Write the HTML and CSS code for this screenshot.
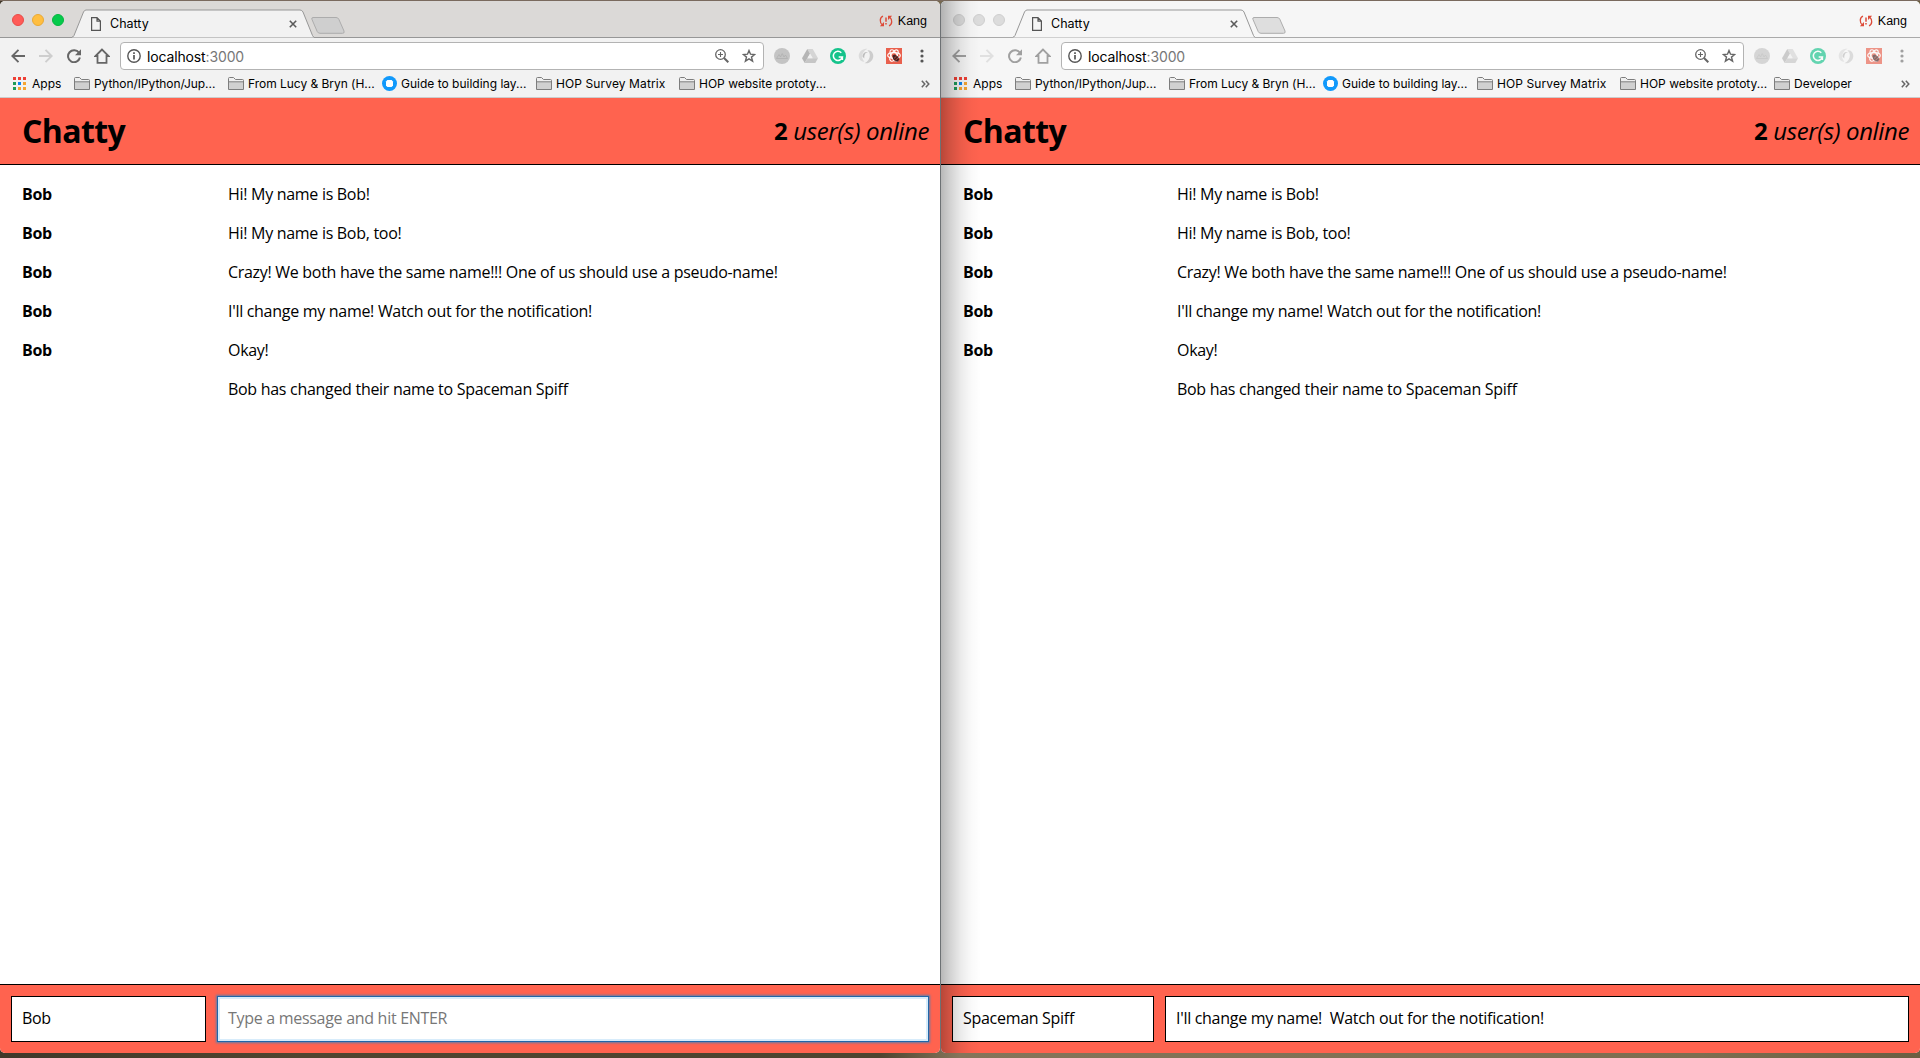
FILE: index.html
```html
<!DOCTYPE html>
<html lang="en">
<head>
<meta charset="utf-8">
<title>Chatty</title>
<link rel="stylesheet" href="styles.css">
</head>
<body>
<svg class="sprite" xmlns="http://www.w3.org/2000/svg">
  <symbol id="tab" viewBox="0 0 242 28"><path class="tab-fill" d="M0 28 L0 27.500 Q1.500 27.500 2 26 L11.500 2.500 Q12.500 .5 14 .5 L228 .5 Q230 .5 231 2.500 L240.500 26 Q241 27.500 242 27.500 L242 28Z"/><path d="M0 27.500 Q1.500 27.500 2 26 L11.500 2.500 Q12.500 .5 14 .5 L228 .5 Q230 .5 231 2.500 L240.500 26 Q241 27.500 242 27.500" fill="none" stroke="#979797"/></symbol>
  <symbol id="newtab" viewBox="0 0 34 17"><path d="M2 .5 H25 Q27 .5 27.800 2.200 L33 14 Q33.800 16.300 31.500 16.300 H9 Q7 16.300 6.200 14.500 L1 2.500 Q.2 .5 2 .5Z" fill="currentColor" stroke="#acacac"/></symbol>
  <symbol id="file" viewBox="0 0 10 14"><path d="M.6 .6 H6 L9.400 4 V13.400 H.6Z M6 .6 V4.200 H9.400" fill="none" stroke="#555" stroke-width="1.200"/></symbol>
  <symbol id="close" viewBox="0 0 8 8"><path d="M.8 .8 L7.200 7.200 M7.200 .8 L.8 7.200" stroke="#5a5a5a" stroke-width="1.600"/></symbol>
  <symbol id="sync" viewBox="0 0 14 12"><g fill="none" stroke="#dd4b39" stroke-width="1.300"><path d="M4 1.200 C.6 2.500 .4 7.500 3.300 9.800 M10 10.800 C13.400 9.500 13.600 4.500 10.700 2.200"/><path d="M7 2.500 V6.800 M7 8 V9.500" stroke-width="1.500"/></g><path d="M5 7 V11.300 H.8Z M9 5 V.7 H13.200Z" fill="#dd4b39"/></symbol>
  <symbol id="back" viewBox="0 0 14 14"><path d="M14 7 H1.500 M7.500 .8 L1.300 7 L7.500 13.200" fill="none" stroke="currentColor" stroke-width="1.900"/></symbol>
  <symbol id="forward" viewBox="0 0 14 14"><path d="M0 7 H12.500 M6.500 .8 L12.700 7 L6.500 13.200" fill="none" stroke="currentColor" stroke-width="1.900"/></symbol>
  <symbol id="reload" viewBox="0 0 14 14"><path d="M12 3.800 A6 6 0 1 0 12.900 8.600" fill="none" stroke="currentColor" stroke-width="2"/><path d="M14 .3 V6.300 H8Z" fill="currentColor"/></symbol>
  <symbol id="home" viewBox="0 0 16 16"><path d="M8 1.500 L1.500 8 H3.500 V14.800 H12.500 V8 H14.500Z" fill="none" stroke="currentColor" stroke-width="1.800"/></symbol>
  <symbol id="info" viewBox="0 0 14 14"><circle cx="7" cy="7" r="6.200" fill="none" stroke="#555" stroke-width="1.400"/><path d="M7 6 V10.600 M7 3.200 V4.900" stroke="#555" stroke-width="1.700"/></symbol>
  <symbol id="zoom" viewBox="0 0 14 14"><circle cx="5.500" cy="5.500" r="4.800" fill="none" stroke="#666" stroke-width="1.300"/><path d="M5.500 3 V8 M3 5.500 H8" stroke="#666" stroke-width="1.100"/><path d="M9 9 L13.300 13.300" stroke="#666" stroke-width="2"/></symbol>
  <symbol id="star" viewBox="0 0 14 14"><path d="M7 1.500 L8.500 5.200 L12.700 5.500 L9.500 8.100 L10.600 12.200 L7 9.900 L3.400 12.200 L4.500 8.100 L1.300 5.500 L5.500 5.200Z" fill="none" stroke="#666" stroke-width="1.400"/></symbol>
  <symbol id="ext-disc" viewBox="0 0 16 16"><circle cx="8" cy="8" r="8" fill="#c4c4c4"/><path d="M2.500 10.500 L5 6.500 L6.500 9 L8.200 5.500 L10 9 L11.500 7 L13.500 10.500Z" fill="none" stroke="#b0b0b0" stroke-width=".8"/></symbol>
  <symbol id="drive" viewBox="0 0 16 14"><path d="M5.300 0 H10.700 L16 9.200 H10.700Z" fill="#d5d5d5"/><path d="M5.300 0 L8 4.700 L2.700 14 L0 9.200Z" fill="#b5b5b5"/><path d="M5.400 9.200 H16 L13.300 14 H2.700Z" fill="#c6c6c6"/><path d="M8 4.700 L10.600 9.200 H5.400Z" fill="#f0f0f0"/></symbol>
  <symbol id="grammar" viewBox="0 0 16 16"><circle cx="8" cy="8" r="8" fill="#15c38b"/><path d="M11.300 4.700 A4.600 4.600 0 1 0 12.400 9 H8.700 M12.400 9 V12" fill="none" stroke="#fff" stroke-width="1.500"/></symbol>
  <symbol id="swirl" viewBox="0 0 16 16"><path d="M9.500 .8 C3 -.5 -1.500 7 1.800 11.500 C3 13.300 5 14 6.500 13.500 C3 11 3 4 9.500 .8Z" fill="#dcdcdc"/><path d="M6.500 15.200 C13 16.500 17.500 9 14.200 4.500 C13 2.700 11 2 9.500 2.500 C13 5 13 12 6.500 15.200Z" fill="#cdcdcd"/><path d="M4.500 8.500 C4.500 5 7.500 3 10.500 4.300 C8 4 6 6 6.300 10.500Z" fill="#bdbdbd"/></symbol>
  <symbol id="react" viewBox="0 0 16 16"><path d="M0 0 H16 V16 H0Z" fill="#e9604d"/><g fill="none" stroke="#fff" stroke-width="1.100"><ellipse cx="8" cy="7.500" rx="6.300" ry="2.900"/><ellipse cx="8" cy="7.500" rx="6.300" ry="2.900" transform="rotate(60 8 7.500)"/><ellipse cx="8" cy="7.500" rx="6.300" ry="2.900" transform="rotate(120 8 7.500)"/></g><path d="M6.500 7.500 L8.500 6.500 L12 8.500 L13.300 11.500 L12 13.500 L9.500 13.500 L7 11Z" fill="#422"/><path d="M7.800 10.500 L10.500 8.300 M9.300 12.300 L12 10" stroke="#d65748" stroke-width=".7"/></symbol>
  <symbol id="dots" viewBox="0 0 4 14"><g fill="currentColor"><circle cx="2" cy="2" r="1.600"/><circle cx="2" cy="7" r="1.600"/><circle cx="2" cy="12" r="1.600"/></g></symbol>
  <symbol id="apps" viewBox="0 0 13 13"><path d="M0 0h3v3H0zM5 0h3v3H5zM10 0h3v3h-3z" fill="#ee4035"/><path d="M0 5h3v3H0zM0 10h3v3H0z" fill="#1e9b58"/><path d="M5 5h3v3H5z" fill="#0b85f2"/><path d="M10 5h3v3h-3zM5 10h3v3H5zM10 10h3v3h-3z" fill="#f5a532"/></symbol>
  <symbol id="folder" viewBox="0 0 16 13"><path d="M.5 12.500 V1.500 Q.5 .5 1.500 .5 H5.500 L7.500 2.500 H14.500 Q15.500 2.500 15.500 3.500 V12.500Z" fill="#efefef" stroke="#7d7d7d"/><path d="M1 5 H15 V12 H1Z" fill="#d0d0d0"/><path d="M.5 4.800 H15.500" stroke="#7d7d7d"/></symbol>
  <symbol id="guide" viewBox="0 0 15 15"><circle cx="7.500" cy="7.500" r="7.500" fill="#1199fb"/><path d="M5.400 4 H9.600 L11 5.400 V9.600 L9.600 11 H5.400 L4 9.600 V5.400Z" fill="#fff"/></symbol>
  <symbol id="more" viewBox="0 0 9 8"><path d="M.8 .8 L3.800 4 L.8 7.200 M4.800 .8 L7.800 4 L4.800 7.200" fill="none" stroke="#666" stroke-width="1.500"/></symbol>
</svg>
<div class="desktop">
  <section class="window active">
    <div class="titlebar">
      <div class="lights"><i class="red"></i><i class="yellow"></i><i class="green"></i></div>
      <div class="tab"><svg class="tab-shape"><use href="#tab"/></svg><svg class="file"><use href="#file"/></svg><span class="tab-title">Chatty</span><svg class="close"><use href="#close"/></svg></div>
      <svg class="newtab"><use href="#newtab"/></svg>
      <div class="profile"><svg class="sync"><use href="#sync"/></svg><span>Kang</span></div>
    </div>
    <div class="toolbar">
      <div class="nav"><svg class="i14"><use href="#back"/></svg><svg class="i14 faded"><use href="#forward"/></svg><svg class="i14"><use href="#reload"/></svg><svg class="i16"><use href="#home"/></svg></div>
      <div class="omnibox"><svg class="i14"><use href="#info"/></svg><span class="url">localhost<em>:3000</em></span><svg class="i14"><use href="#zoom"/></svg><svg class="i14 star"><use href="#star"/></svg></div>
      <div class="extensions"><svg class="i16"><use href="#ext-disc"/></svg><svg class="i16"><use href="#drive"/></svg><svg class="i16"><use href="#grammar"/></svg><svg class="i16"><use href="#swirl"/></svg><svg class="i16"><use href="#react"/></svg></div>
      <svg class="dots"><use href="#dots"/></svg>
    </div>
    <div class="bookmarks">
      <div class="mark apps"><svg><use href="#apps"/></svg><span>Apps</span></div>
      <div class="mark python"><svg><use href="#folder"/></svg><span>Python/IPython/Jup...</span></div>
      <div class="mark lucy"><svg><use href="#folder"/></svg><span>From Lucy &amp; Bryn (H...</span></div>
      <div class="mark guide"><svg><use href="#guide"/></svg><span>Guide to building lay...</span></div>
      <div class="mark survey"><svg><use href="#folder"/></svg><span>HOP Survey Matrix</span></div>
      <div class="mark website"><svg><use href="#folder"/></svg><span>HOP website prototy...</span></div>
      <svg class="more"><use href="#more"/></svg>
    </div>
    <header class="nav-bar"><h1>Chatty</h1><p><b>2</b> <i>user(s) online</i></p></header>
    <main class="messages">
      <div class="message"><b>Bob</b><span>Hi! My name is Bob!</span></div>
      <div class="message"><b>Bob</b><span>Hi! My name is Bob, too!</span></div>
      <div class="message"><b>Bob</b><span>Crazy! We both have the same name!!! One of us should use a pseudo-name!</span></div>
      <div class="message"><b>Bob</b><span>I'll change my name! Watch out for the notification!</span></div>
      <div class="message"><b>Bob</b><span>Okay!</span></div>
      <div class="message"><b></b><span>Bob has changed their name to Spaceman Spiff</span></div>
    </main>
    <footer class="chat-bar"><div class="field name">Bob</div><div class="field text focused">Type a message and hit ENTER</div></footer>
  </section>
  <section class="window inactive">
    <div class="titlebar">
      <div class="lights"><i></i><i></i><i></i></div>
      <div class="tab"><svg class="tab-shape"><use href="#tab"/></svg><svg class="file"><use href="#file"/></svg><span class="tab-title">Chatty</span><svg class="close"><use href="#close"/></svg></div>
      <svg class="newtab"><use href="#newtab"/></svg>
      <div class="profile"><svg class="sync"><use href="#sync"/></svg><span>Kang</span></div>
    </div>
    <div class="toolbar">
      <div class="nav"><svg class="i14"><use href="#back"/></svg><svg class="i14 faded"><use href="#forward"/></svg><svg class="i14"><use href="#reload"/></svg><svg class="i16"><use href="#home"/></svg></div>
      <div class="omnibox"><svg class="i14"><use href="#info"/></svg><span class="url">localhost<em>:3000</em></span><svg class="i14"><use href="#zoom"/></svg><svg class="i14 star"><use href="#star"/></svg></div>
      <div class="extensions"><svg class="i16"><use href="#ext-disc"/></svg><svg class="i16"><use href="#drive"/></svg><svg class="i16"><use href="#grammar"/></svg><svg class="i16"><use href="#swirl"/></svg><svg class="i16"><use href="#react"/></svg></div>
      <svg class="dots"><use href="#dots"/></svg>
    </div>
    <div class="bookmarks">
      <div class="mark apps"><svg><use href="#apps"/></svg><span>Apps</span></div>
      <div class="mark python"><svg><use href="#folder"/></svg><span>Python/IPython/Jup...</span></div>
      <div class="mark lucy"><svg><use href="#folder"/></svg><span>From Lucy &amp; Bryn (H...</span></div>
      <div class="mark guide"><svg><use href="#guide"/></svg><span>Guide to building lay...</span></div>
      <div class="mark survey"><svg><use href="#folder"/></svg><span>HOP Survey Matrix</span></div>
      <div class="mark website"><svg><use href="#folder"/></svg><span>HOP website prototy...</span></div>
      <div class="mark developer"><svg><use href="#folder"/></svg><span>Developer</span></div>
      <svg class="more"><use href="#more"/></svg>
    </div>
    <header class="nav-bar"><h1>Chatty</h1><p><b>2</b> <i>user(s) online</i></p></header>
    <main class="messages">
      <div class="message"><b>Bob</b><span>Hi! My name is Bob!</span></div>
      <div class="message"><b>Bob</b><span>Hi! My name is Bob, too!</span></div>
      <div class="message"><b>Bob</b><span>Crazy! We both have the same name!!! One of us should use a pseudo-name!</span></div>
      <div class="message"><b>Bob</b><span>I'll change my name! Watch out for the notification!</span></div>
      <div class="message"><b>Bob</b><span>Okay!</span></div>
      <div class="message"><b></b><span>Bob has changed their name to Spaceman Spiff</span></div>
    </main>
    <footer class="chat-bar"><div class="field name">Spaceman Spiff</div><div class="field text">I'll change my name!&nbsp; Watch out for the notification!</div></footer>
  </section>
</div>
</body>
</html>
```
FILE: styles.css
```css
* { box-sizing: border-box; }
body { margin: 0; overflow: hidden; font-family: "Open Sans", sans-serif; color: #000; }
svg { display: block; flex: none; }
.sprite { position: absolute; width: 0; height: 0; }
.desktop {
  display: flex; gap: 1px; width: 1920px; height: 1058px; padding: 1px 0 5px;
  background:
    linear-gradient(#7a6a5e, #7a6a5e) 0 0 / 100% 1px no-repeat,
    linear-gradient(90deg, #40382a, #51452f 300px, #4e442f 880px, #85755a 960px, #7d6e50 1700px, #6b5f42);
}
.window {
  position: relative; display: flex; flex-direction: column; height: 1052px; overflow: hidden;
  border-radius: 5px; background: #fff;
}
.active { width: 940px; --name-column: 206px; --name-field: 195px; --chrome: #f2f2f2; }
.inactive { width: 979px; --name-column: 214px; --name-field: 202px; --chrome: #f6f6f6; box-shadow: -1px 0 0 #6d7174; }
.inactive::after {
  content: ""; position: absolute; inset: 0 auto 0 0; width: 40px; pointer-events: none;
  background: linear-gradient(90deg, rgba(0,0,0,.28), rgba(0,0,0,.17) 25%, rgba(0,0,0,.08) 50%, rgba(0,0,0,.025) 75%, transparent);
}

.titlebar {
  display: flex; align-items: flex-start; flex: none; height: 37px; padding-left: 12px;
  background: #dbd9d7; border-bottom: 1px solid #979797;
  font: 12.500px Inter, sans-serif;
}
.inactive .titlebar { background: #f6f6f6; border-color: #aaa; }
.lights { display: flex; gap: 8px; width: 60px; padding-top: 13px; }
.lights i { width: 12px; height: 12px; border-radius: 50%; background: #dcdcdc; border: 1px solid #cfcfcf; }
.lights .red { background: #ff5b57; border-color: #e84c48; }
.lights .yellow { background: #ffbe40; border-color: #e9a935; }
.lights .green { background: #05ca4b; border-color: #05b640; }
.tab { position: relative; display: flex; align-items: center; width: 242px; height: 29px; margin: 8px 0 -1px; padding: 0 17px 0 19px; }
.tab-shape { position: absolute; left: 0; top: 0; width: 242px; height: 29px; color: var(--chrome); }
.tab-fill { fill: currentColor; }
.file { position: relative; width: 10px; height: 14px; }
.tab-title { position: relative; margin-left: 9px; flex: 1; }
.close { position: relative; width: 8px; height: 8px; }
.newtab { width: 34px; height: 17px; margin: 16px 0 0 -3px; color: #cfcfcf; }
.inactive .newtab { color: #dedede; }
.profile { display: flex; align-items: center; gap: 5px; height: 15px; margin: 12px 13px 0 auto; font-family: "Liberation Sans", sans-serif; }
.sync { width: 14px; height: 12px; }

.toolbar { display: flex; align-items: center; flex: none; height: 36px; padding: 0 16px 0 11px; background: var(--chrome); color: #666; }
.inactive .toolbar { color: #a0a0a0; }
.nav { display: flex; align-items: center; gap: 14px; width: 109px; }
.nav .i16 { margin-left: -1px; }
.faded { opacity: .25; }
.i14 { width: 14px; height: 14px; }
.i16 { width: 16px; height: 16px; }
.omnibox { display: flex; align-items: center; flex: 1; height: 28px; padding: 0 7px 0 6px; border: 1px solid #b3b3b3; border-radius: 4px; background: #fff; }
.url { flex: 1; margin-left: 6px; color: #000; font: 14px Inter, sans-serif; letter-spacing: -.14px; }
.url em { color: #777; font-style: normal; }
.star { margin-left: 13px; }
.extensions { display: flex; align-items: center; gap: 12px; margin-left: 10px; }
.inactive .extensions { opacity: .65; }
.dots { width: 4px; height: 14px; margin-left: 18px; }
.active .dots { color: #555; }

.bookmarks { display: flex; align-items: center; flex: none; height: 24px; padding: 0 10px 4px 13px; background: var(--chrome); border-bottom: 1px solid #ccc; font: 12px Inter, sans-serif; white-space: nowrap; }
.mark { display: flex; align-items: center; gap: 4px; }
.mark svg { width: 16px; height: 13px; }
.apps { width: 61px; gap: 6px; }
.mark.apps svg { width: 13px; }
.mark.guide svg { width: 15px; height: 15px; }
.python, .website { width: 154px; }
.python { letter-spacing: -.06px; }
.lucy { width: 154px; letter-spacing: -.03px; }
.guide { width: 154px; }
.survey { width: 143px; letter-spacing: .1px; }
.more { width: 9px; height: 8px; margin-left: auto; }

.nav-bar { display: flex; align-items: center; justify-content: space-between; flex: none; height: 67px; padding: 0 11px 0 22px; background: #ff634f; border-bottom: 1px solid #000; }
.nav-bar h1 { margin: 0; font-size: 32px; line-height: 44px; letter-spacing: -.6px; }
.nav-bar p { margin: 0; padding-bottom: 1px; font-size: 24px; line-height: 32px; letter-spacing: -.38px; }
.messages { flex: 1; padding-top: 10px; }
.message { display: flex; height: 39px; padding-left: 22px; font-size: 16px; line-height: 39px; letter-spacing: -.295px; white-space: nowrap; }
.message b { width: var(--name-column); }

.chat-bar { display: flex; gap: 11px; flex: none; height: 69px; padding: 11px; background: #ff634f; border-top: 1px solid #000; }
.field { height: 46px; padding: 0 10px; border: 1px solid #000; background: #fff; font-size: 16px; line-height: 43px; letter-spacing: -.295px; white-space: nowrap; }
.name { width: var(--name-field); }
.text { flex: 1; }
.focused { color: #777; border-color: #1f66a8; box-shadow: 0 0 2px 1px rgba(60,130,190,.8), inset 0 0 0 2px #d7ecfb; }
```
